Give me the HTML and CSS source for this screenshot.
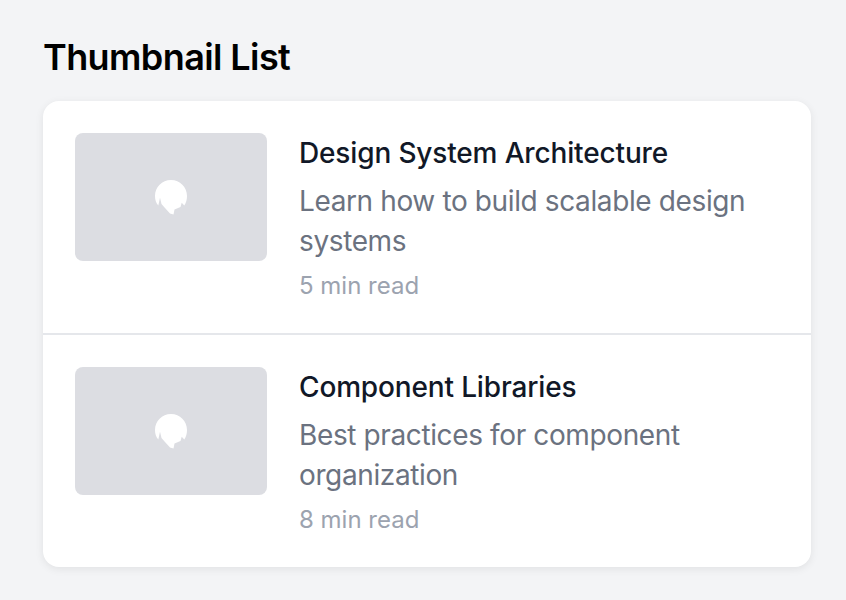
FILE: index.html
```html
<!DOCTYPE html>
<html lang="en">
<head>
<meta charset="utf-8">
<title>Thumbnail List</title>
<link rel="stylesheet" href="styles.css">
</head>
<body>
<main class="page">
  <h1 class="heading">Thumbnail List</h1>
  <section class="card">
    <article class="item">
      <div class="thumb">
        <svg class="thumb-icon" viewBox="0 0 34 37" aria-hidden="true"><path d="M17 1C26 1 33 8 33 17C33 21 32 24 30.300 26.500L27.700 23.800L26.500 28L20.500 30.500L19.500 35.500L16 34.500L11 29L7.500 25L6 18.800L4.300 26.500C2 24 1 21 1 17C1 8 8 1 17 1Z"/></svg>
      </div>
      <div class="body">
        <h2 class="title">Design System Architecture</h2>
        <p class="desc">Learn how to build scalable design systems</p>
        <p class="meta">5 min read</p>
      </div>
    </article>
    <article class="item">
      <div class="thumb">
        <svg class="thumb-icon" viewBox="0 0 34 37" aria-hidden="true"><path d="M17 1C26 1 33 8 33 17C33 21 32 24 30.300 26.500L27.700 23.800L26.500 28L20.500 30.500L19.500 35.500L16 34.500L11 29L7.500 25L6 18.800L4.300 26.500C2 24 1 21 1 17C1 8 8 1 17 1Z"/></svg>
      </div>
      <div class="body">
        <h2 class="title">Component Libraries</h2>
        <p class="desc">Best practices for component organization</p>
        <p class="meta">8 min read</p>
      </div>
    </article>
  </section>
</main>
</body>
</html>
```
FILE: styles.css
```css
* { box-sizing: border-box; }
html, body { margin: 0; padding: 0; }
body {
  background: #f3f4f6;
  font-family: Inter, "Liberation Sans", sans-serif;
  height: 600px;
  overflow: hidden;
}
.page { padding: 37px 35px 0 43px; }
.heading {
  margin: 0 0 24px;
  font-size: 36px;
  line-height: 40px;
  font-weight: 600;
  letter-spacing: -0.6px;
  color: #000;
}
.card {
  background: #fff;
  border-radius: 16px;
  box-shadow: 0 2px 8px rgba(0,0,0,.08);
  overflow: hidden;
}
.item {
  display: flex;
  gap: 32px;
  padding: 32px;
  border-bottom: 2px solid #e5e7eb;
}
.item:last-child { border-bottom: 0; }
.thumb {
  flex: 0 0 192px;
  height: 128px;
  border-radius: 8px;
  background: #dcdde2;
  display: flex;
  align-items: center;
  justify-content: center;
}
.thumb-icon { width: 34px; height: 37px; fill: #fff; }
.body { flex: 1; min-width: 0; }
.title {
  margin: 0 0 8px;
  font-size: 28px;
  line-height: 40px;
  font-weight: 500;
  letter-spacing: -0.15px;
  color: #111827;
}
.desc {
  margin: 0 0 9px;
  font-size: 28px;
  line-height: 40px;
  letter-spacing: -0.38px;
  color: #6b7280;
}
.meta {
  margin: 0 0 -1px;
  font-size: 24px;
  line-height: 32px;
  color: #9ca3af;
}
```
